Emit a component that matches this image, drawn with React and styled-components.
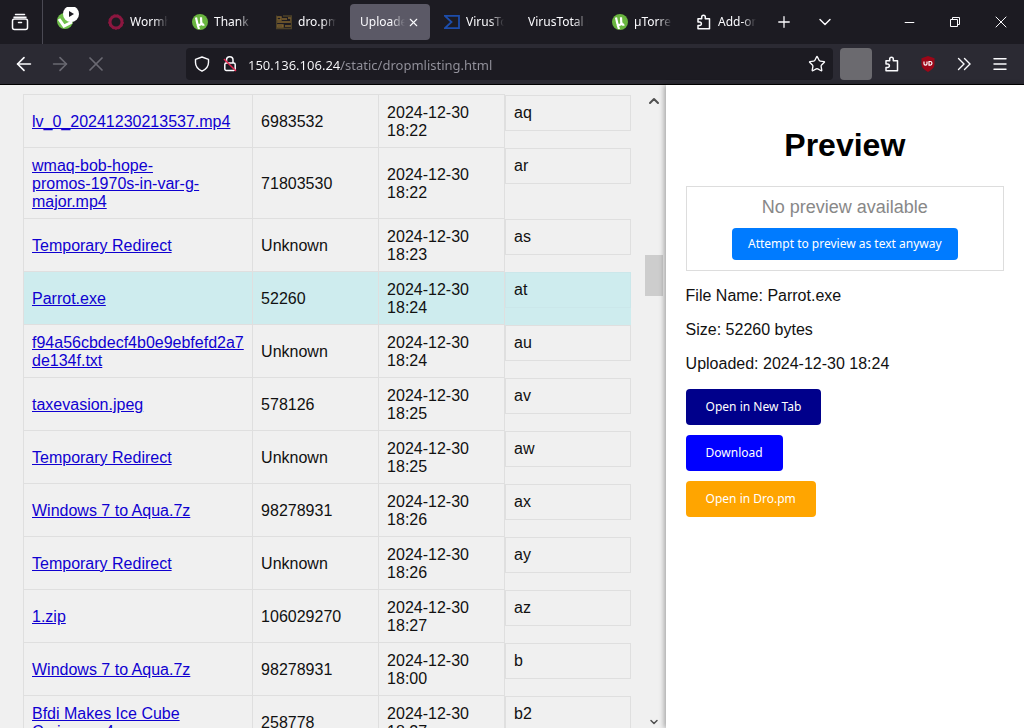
import React from 'react';
import styled, { createGlobalStyle } from 'styled-components';
import { ArrowLeft, ArrowRight, ChevronDown, ChevronUp, Menu, Minus, Plus, Star, X } from 'lucide-react';

const COLORS = {
  frame: '#1c1b22',
  toolbar: '#2b2a33',
  tabActive: '#5b5966',
  chromeText: '#fbfbfe',
  chromeMuted: '#94939d',
  listBack: '#f0f0f0',
  rowSelected: '#ceecee',
  border: '#dfdfdf',
  link: '#0f00d0',
};

const GlobalStyle = createGlobalStyle`
  * {
    box-sizing: border-box;
  }

  body {
    margin: 0;
    background: #fff;
    color: #111;
    font-family: 'Liberation Sans', Arial, sans-serif;
    font-size: 16px;
    line-height: 18px;
  }

  button {
    border: 0;
    padding: 0;
    background: none;
    color: inherit;
  }
`;

const Window = styled.div`
  display: flex;
  flex-direction: column;
  height: 100vh;
  overflow: hidden;
`;

const TabStrip = styled.header`
  display: flex;
  align-items: center;
  flex: none;
  height: 44px;
  background: ${COLORS.frame};
  color: ${COLORS.chromeText};
`;

const FirefoxView = styled.div`
  display: flex;
  align-self: stretch;
  border-right: 1px solid #4a4953;
`;

const IconButton = styled.button`
  display: flex;
  align-items: center;
  justify-content: center;
  flex: none;
  width: ${({ $width }) => $width || 36}px;
  height: 36px;
  color: ${({ $dim }) => ($dim ? '#6a6972' : COLORS.chromeText)};
`;

const FirefoxViewButton = styled(IconButton)`
  width: 42px;
  height: 44px;
  padding-right: 2px;
`;

const PinnedTab = styled.button`
  width: 55px;
  height: 44px;
  padding-left: 13px;
  text-align: left;
`;

const Tabs = styled.nav`
  display: flex;
  gap: 4px;
`;

const Tab = styled.button`
  display: flex;
  align-items: center;
  gap: 6px;
  width: 80px;
  height: 36px;
  padding: 0 10px;
  border-radius: 4px;
  background: ${({ $active }) => ($active ? COLORS.tabActive : 'transparent')};
  font: 12px/18px 'Noto Sans', sans-serif;
`;

const TabLabel = styled.span`
  flex: 1;
  min-width: 0;
  overflow: hidden;
  text-align: left;
  white-space: nowrap;
  mask-image: linear-gradient(to left, transparent, #000 14px);
`;

const TabClose = styled(X)`
  flex: none;
  margin-left: -4px;
`;

const WindowControls = styled.div`
  display: flex;
  margin-left: auto;
`;

const Toolbar = styled.div`
  display: flex;
  align-items: center;
  flex: none;
  height: 41px;
  padding: 0 6px;
  border-bottom: 1px solid #000;
  background: ${COLORS.toolbar};
  color: ${COLORS.chromeText};
`;

const UrlBar = styled.div`
  display: flex;
  align-items: center;
  flex: 1;
  height: 32px;
  margin: 0 5px 0 72px;
  padding-left: 2px;
  border-radius: 4px;
  background: ${COLORS.frame};
`;

const UrlInput = styled.input`
  flex: 1;
  min-width: 0;
  height: 26px;
  margin-left: 4px;
  padding: 2px 0 0;
  border: 0;
  outline: 0;
  font: 13px/24px 'Noto Sans', sans-serif;
  color: transparent;
  background: linear-gradient(to right, ${COLORS.chromeText} 93px, ${COLORS.chromeMuted} 93px);
  background-clip: text;
`;

const Placeholder = styled.span`
  width: 32px;
  height: 32px;
  border-radius: 4px;
  background: #6b6a6f;
`;

const Page = styled.main`
  display: flex;
  flex: 1;
  min-height: 0;
`;

const ListPane = styled.section`
  display: flex;
  flex: 0 0 65%;
  min-height: 0;
  background: ${COLORS.listBack};
`;

const ListScroller = styled.div`
  flex: 1;
  overflow: hidden;
  padding: 9px 13px 0 23px;
`;

const FileTable = styled.table`
  width: 100%;
  table-layout: fixed;
  border-collapse: collapse;

  td {
    padding: 9px 8px 7px;
    border: 1px solid ${COLORS.border};
    overflow-wrap: break-word;
  }

  td:last-child {
    padding: 0;
    border-width: 0 0 0 1px;
    vertical-align: top;
  }
`;

const NarrowCol = styled.col`
  width: 126px;
`;

const FileRow = styled.tr`
  background: ${({ $selected }) => ($selected ? COLORS.rowSelected : 'transparent')};
`;

const FileLink = styled.a`
  color: ${COLORS.link};
  text-decoration: underline;
`;

const KeyBox = styled.div`
  padding: 8px;
  border: 1px solid ${({ $selected }) => ($selected ? '#cbe7ea' : COLORS.border)};
`;

const Scrollbar = styled.div`
  display: flex;
  flex-direction: column;
  align-items: center;
  width: 22px;
  padding: 8px 2px 0 0;
  color: #505050;
`;

const ScrollTrack = styled.div`
  flex: 1;
  width: 18px;
  padding-top: 146px;
`;

const ScrollThumb = styled.div`
  height: 41px;
  background: #cdcdcd;
`;

const PreviewPane = styled.aside`
  position: relative;
  flex: 1;
  padding: 20px;
  background: #fff;
  box-shadow: -2px 0 5px rgba(0, 0, 0, 0.3);
`;

const Title = styled.h1`
  margin: 21px 0;
  color: #000;
  font-size: 32px;
  line-height: 39px;
  text-align: center;
`;

const PreviewBox = styled.div`
  display: flex;
  flex-direction: column;
  align-items: center;
  gap: 10px;
  padding: 10px;
  border: 1px solid #ddd;
  color: #888;
  font-size: 18px;
  line-height: 21px;
`;

const Info = styled.p`
  margin: 16px 0;
`;

const Actions = styled.div`
  display: flex;
  flex-direction: column;
  align-items: flex-start;
  gap: 10px;
`;

const Button = styled.button`
  padding: ${({ $small }) => ($small ? '8px 16px' : '10px 20px')};
  border-radius: 4px;
  background: ${({ $color }) => $color};
  color: #fff;
  font: 12px/16px 'Noto Sans', sans-serif;
`;

const ArchiveIcon = () => (
  <svg width="18" height="18" viewBox="0 0 18 18" fill="none" stroke="currentColor" strokeWidth="1.5" strokeLinecap="round">
    <path d="M4.5 1.5h9M3 4.3h12" />
    <rect x="1.5" y="6" width="15" height="10.5" rx="2" />
    <path d="M7.5 9.5h3" />
  </svg>
);

const PinnedIcon = () => (
  <svg width="24" height="28" viewBox="0 0 24 28">
    <circle cx="9" cy="14" r="8" fill="#6fbf4a" />
    <path d="M3 12l5 7 8-4" fill="none" stroke="#fff" strokeWidth="3" />
    <circle cx="15" cy="7" r="8" fill="#fff" />
    <path d="M13 4l5 3-5 3z" fill="#1c1b22" />
  </svg>
);

const WormholeIcon = () => (
  <svg width="16" height="16" viewBox="0 0 16 16" fill="none" stroke="#8c1740">
    <circle cx="8" cy="8" r="6" strokeWidth="3" />
    <circle cx="8" cy="8" r="7.3" strokeDasharray="2 1.5" />
  </svg>
);

const TorrentIcon = () => (
  <svg width="16" height="16" viewBox="0 0 16 16">
    <circle cx="8" cy="8" r="8" fill="#69b53f" />
    <path d="M4 3.5l1.3 6c.4 2 3.2 2 4-.2L9 3.3M9.3 8.5c.5 2 1.7 2.5 3 2M5.5 10.5L7 15" fill="none" stroke="#fff" strokeWidth="2.2" />
  </svg>
);

const DropIcon = () => (
  <svg width="16" height="16" viewBox="0 0 16 16" fill="none" stroke="#80642f" strokeWidth="1.4">
    <path d="M1 3h4v3H1zM1 8h14M6 5h5M12 4h3v3M1 11h6v2H1zM9 12h6" />
    <path d="M0 14.5h16M.5 1.5v13M7 2h8.5v12" stroke="#4c4128" />
  </svg>
);

const VirusTotalIcon = () => (
  <svg width="16" height="16" viewBox="0 0 16 16" fill="none" stroke="#1d4dab" strokeWidth="1.8">
    <path d="M1 1.9h14v12.2H1l6.5-6.1z" />
  </svg>
);

const PuzzleIcon = () => (
  <svg width="16" height="16" viewBox="0 0 16 16" fill="none" stroke="currentColor" strokeWidth="1.5" strokeLinejoin="round">
    <path d="M2 4.7h3.7V3a1.8 1.8 0 0 1 3.6 0v1.7h4.2v10H2v-3.2h1.7a1.7 1.7 0 0 0 0-3.4H2z" />
  </svg>
);

const ShieldIcon = () => (
  <svg width="16" height="16" viewBox="0 0 16 16" fill="none" stroke="currentColor" strokeWidth="1.4" strokeLinejoin="round">
    <path d="M8 1l6.5 2.4v3.2c0 3.8-2.4 6.8-6.5 8.6-4.1-1.8-6.5-4.8-6.5-8.6V3.4z" />
  </svg>
);

const LockIcon = () => (
  <svg width="16" height="16" viewBox="0 0 16 16" fill="none" stroke="currentColor" strokeWidth="1.5">
    <path d="M4.5 7V4a3.2 3.2 0 0 1 6.5 0v3" />
    <rect x="2.8" y="7" width="10.4" height="7.5" rx="1.5" />
    <path d="M2 3l12 12" stroke="#e22850" />
  </svg>
);

const BlockerIcon = () => (
  <svg width="16" height="16" viewBox="0 0 16 16" fill="none">
    <path d="M8 0l6.5 2.3v6.2c0 3-2.5 5.3-6.5 7.5-4-2.2-6.5-4.5-6.5-7.5V2.3z" fill="#9b0718" />
    <path d="M4 5.5v2.2c0 1.8 3 1.8 3 0V5.5M9 5.5v3.6h1.3c2.2 0 2.2-3.6 0-3.6z" stroke="#fff" strokeWidth="1.2" />
  </svg>
);

const OverflowIcon = () => (
  <svg width="16" height="16" viewBox="0 0 16 16" fill="none" stroke="currentColor" strokeWidth="1.4" strokeLinecap="round">
    <path d="M2.5 2.5L8 8l-5.5 5.5M8.5 2.5L14 8l-5.5 5.5" />
  </svg>
);

const RestoreIcon = () => (
  <svg width="12" height="12" viewBox="0 0 12 12" fill="none" stroke="currentColor">
    <path d="M1.5 3.5h7v7h-7zM3.5 3.5v-2h7v7h-2" />
  </svg>
);

const tabs = [
  { label: 'Wormh', Icon: WormholeIcon },
  { label: 'Thank', Icon: TorrentIcon },
  { label: 'dro.pm', Icon: DropIcon },
  { label: 'Uploade', active: true },
  { label: 'VirusTo', Icon: VirusTotalIcon },
  { label: 'VirusTotal r' },
  { label: 'µTorren', Icon: TorrentIcon },
  { label: 'Add-on', Icon: PuzzleIcon },
];

// the word joiner keeps "promos-1970s-" on one line
const files = [
  ['lv_0_20241230213537.mp4', '6983532', '18:22', 'aq'],
  ['wmaq-bob-hope-promos-\u20601970s-in-var-g-major.mp4', '71803530', '18:22', 'ar'],
  ['Temporary Redirect', 'Unknown', '18:23', 'as'],
  ['Parrot.exe', '52260', '18:24', 'at'],
  ['f94a56cbdecf4b0e9ebfefd2a7de134f.txt', 'Unknown', '18:24', 'au'],
  ['taxevasion.jpeg', '578126', '18:25', 'av'],
  ['Temporary Redirect', 'Unknown', '18:25', 'aw'],
  ['Windows 7 to Aqua.7z', '98278931', '18:26', 'ax'],
  ['Temporary Redirect', 'Unknown', '18:26', 'ay'],
  ['1.zip', '106029270', '18:27', 'az'],
  ['Windows 7 to Aqua.7z', '98278931', '18:00', 'b'],
  ['Bfdi Makes Ice Cube Crying.mp4', '258778', '18:27', 'b2'],
];

const BrowserTabs = () => (
  <TabStrip>
    <FirefoxView>
      <FirefoxViewButton aria-label="Recent browsing"><ArchiveIcon /></FirefoxViewButton>
    </FirefoxView>
    <PinnedTab aria-label="Pinned tab"><PinnedIcon /></PinnedTab>
    <Tabs>
      {tabs.map(({ label, Icon, active }, i) => (
        <Tab key={i} $active={active}>
          {Icon && <Icon />}
          <TabLabel>{label}</TabLabel>
          {active && <TabClose size={13} strokeWidth={2} />}
        </Tab>
      ))}
    </Tabs>
    <IconButton aria-label="New tab"><Plus size={18} strokeWidth={1.7} /></IconButton>
    <IconButton $width={46} aria-label="List all tabs"><ChevronDown size={20} strokeWidth={1.7} /></IconButton>
    <WindowControls>
      <IconButton $width={46} aria-label="Minimize"><Minus size={15} strokeWidth={1.6} /></IconButton>
      <IconButton $width={46} aria-label="Restore"><RestoreIcon /></IconButton>
      <IconButton $width={46} aria-label="Close"><X size={20} strokeWidth={1.2} /></IconButton>
    </WindowControls>
  </TabStrip>
);

const NavBar = () => (
  <Toolbar>
    <IconButton aria-label="Back"><ArrowLeft size={22} strokeWidth={1.8} /></IconButton>
    <IconButton $dim aria-label="Forward"><ArrowRight size={22} strokeWidth={1.8} /></IconButton>
    <IconButton $dim aria-label="Stop"><X size={24} strokeWidth={1.7} /></IconButton>
    <UrlBar>
      <IconButton $width={28} aria-label="Tracking protection"><ShieldIcon /></IconButton>
      <IconButton $width={28} aria-label="Connection not secure"><LockIcon /></IconButton>
      <UrlInput aria-label="Address" defaultValue="150.136.106.24/static/dropmlisting.html" />
      <IconButton $width={32} aria-label="Bookmark"><Star size={18} strokeWidth={1.8} /></IconButton>
    </UrlBar>
    <IconButton aria-label="Extension"><Placeholder /></IconButton>
    <IconButton aria-label="Extensions"><PuzzleIcon /></IconButton>
    <IconButton aria-label="Blocker"><BlockerIcon /></IconButton>
    <IconButton aria-label="More tools"><OverflowIcon /></IconButton>
    <IconButton aria-label="Menu"><Menu size={18} strokeWidth={1.9} /></IconButton>
  </Toolbar>
);

const FileList = () => (
  <ListPane>
    <ListScroller>
      <FileTable>
        <colgroup>
          <col />
          <NarrowCol />
          <NarrowCol />
          <NarrowCol />
        </colgroup>
        <tbody>
          {files.map(([name, size, time, key]) => {
            const selected = key === 'at';
            return (
              <FileRow key={key} $selected={selected}>
                <td><FileLink href="#">{name}</FileLink></td>
                <td>{size}</td>
                <td>2024-12-30 {time}</td>
                <td><KeyBox $selected={selected}>{key}</KeyBox></td>
              </FileRow>
            );
          })}
        </tbody>
      </FileTable>
    </ListScroller>
    <Scrollbar>
      <ChevronUp size={16} strokeWidth={3} />
      <ScrollTrack><ScrollThumb /></ScrollTrack>
      <ChevronDown size={12} strokeWidth={3} />
    </Scrollbar>
  </ListPane>
);

const Preview = () => (
  <PreviewPane>
    <Title>Preview</Title>
    <PreviewBox>
      <span>No preview available</span>
      <Button $small $color="#007bff">Attempt to preview as text anyway</Button>
    </PreviewBox>
    <Info>File Name: Parrot.exe</Info>
    <Info>Size: 52260 bytes</Info>
    <Info>Uploaded: 2024-12-30 18:24</Info>
    <Actions>
      <Button $color="#00008b">Open in New Tab</Button>
      <Button $color="#0000ff">Download</Button>
      <Button $color="#ffa500">Open in Dro.pm</Button>
    </Actions>
  </PreviewPane>
);

const App = () => (
  <Window>
    <GlobalStyle />
    <BrowserTabs />
    <NavBar />
    <Page>
      <FileList />
      <Preview />
    </Page>
  </Window>
);

export default App;
